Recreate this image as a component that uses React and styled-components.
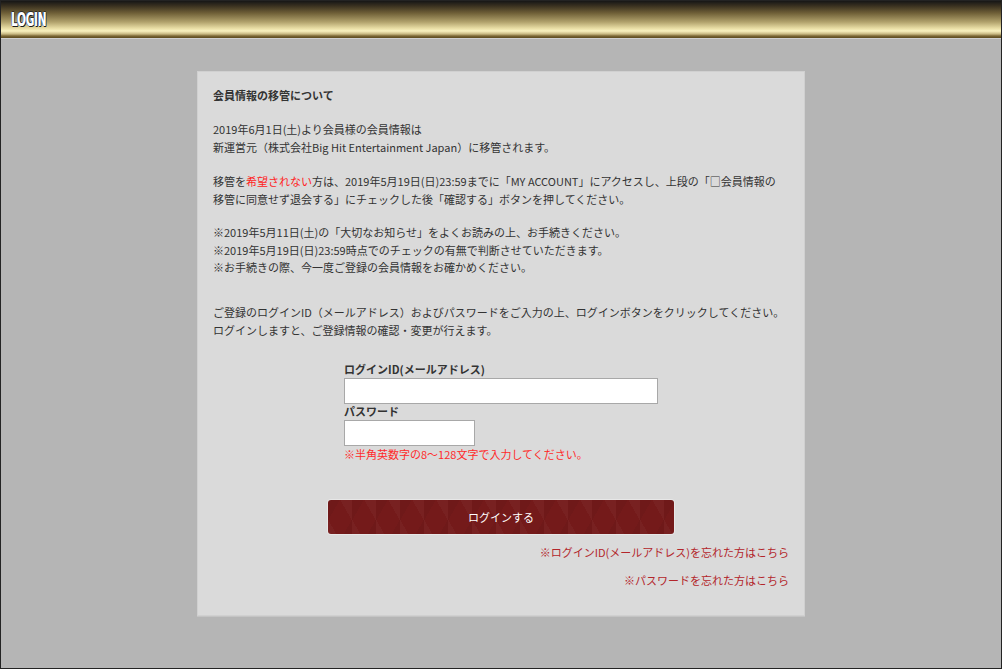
import React from 'react'
import styled, { createGlobalStyle } from 'styled-components'

const GlobalStyle = createGlobalStyle`
  html, body {
    margin: 0;
    padding: 0;
  }
  body {
    font-family: "Noto Sans CJK JP", "Noto Sans", sans-serif;
  }
  * {
    box-sizing: border-box;
  }
`

const Page = styled.div`
  height: 100vh;
  background: #b5b5b5;
  border: 1px solid #232323;
  display: flex;
  flex-direction: column;
  overflow: hidden;
`

const Header = styled.header`
  height: 38px;
  flex-shrink: 0;
  padding-left: 10px;
  display: flex;
  align-items: center;
  background: linear-gradient(
    to bottom,
    #161616 0px,
    #3a3120 5px,
    #6e5f37 12px,
    #b1a26c 21px,
    #e6dba2 27px,
    #faf2bf 30px,
    #c9b982 33px,
    #7c6835 35px,
    #5c4a1e 37px,
    #8c8c8c 38px
  );
  border-bottom: 1px solid #cfcfcf;
`

const HeaderTitle = styled.h1`
  margin: 0;
  font-family: "DejaVu Sans Condensed", "DejaVu Sans", sans-serif;
  font-weight: bold;
  font-size: 19px;
  line-height: 19px;
  letter-spacing: -0.5px;
  transform: scaleX(0.62);
  transform-origin: left center;
  color: #ffffff;
  text-shadow: -1px 0 0 #3d6fb0, 1px 1px 0 #1a1a1a, 0 -1px 0 #2a2a2a, 1px 0 0 #111;
`

const Main = styled.main`
  flex: 1;
  display: flex;
  justify-content: center;
  align-items: flex-start;
  padding-top: 32px;
`

const Card = styled.section`
  width: 608px;
  background: #dadada;
  border: 1px solid #d0d0d0;
  box-shadow: 0 1px 0 #c4c4c4;
  padding: 14px 15px 26px 15px;
  color: #333333;
  font-size: 11px;
  line-height: 18px;
`

const Title = styled.h2`
  margin: 0 0 16px;
  font-size: 11px;
  font-weight: bold;
  line-height: 18px;
`

const Paragraph = styled.p`
  margin: 0;
  margin-bottom: ${p => (p.$gap === undefined ? 16 : p.$gap)}px;
  line-height: ${p => p.$lh || 18}px;
`

const Red = styled.span`
  color: #ff2222;
`

const Form = styled.form`
  margin: 23px auto 0;
  width: 314px;
  display: flex;
  flex-direction: column;
`

const Label = styled.label`
  font-weight: bold;
  line-height: 14px;
  margin-bottom: 2px;
`

const Input = styled.input`
  display: block;
  height: 26px;
  width: ${p => p.$width}px;
  border: 1px solid #a8a8a8;
  background: #ffffff;
  margin: 0;
  padding: 2px 4px;
  font: inherit;
  outline: none;
`

const Note = styled.div`
  color: #ff2a2a;
  line-height: 14px;
  margin-top: 1px;
`

const Button = styled.button`
  display: block;
  margin: 39px auto 0;
  width: 346px;
  height: 34px;
  border: none;
  border-radius: 3px;
  color: #ffffff;
  font-family: inherit;
  font-size: 11px;
  cursor: pointer;
  background-color: #741a1a;
  background-image:
    linear-gradient(60deg, rgba(255, 255, 255, 0.03) 25%, transparent 25%, transparent 75%, rgba(255, 255, 255, 0.03) 75%),
    linear-gradient(-60deg, rgba(0, 0, 0, 0.04) 25%, transparent 25%, transparent 75%, rgba(0, 0, 0, 0.04) 75%);
  background-size: 24px 40px;
  box-shadow: 0 0 0 1px rgba(255, 255, 255, 0.35);
`

const Links = styled.div`
  margin-top: 9px;
  display: flex;
  flex-direction: column;
  align-items: flex-end;
  gap: 10px;
`

const TextLink = styled.a`
  color: #b3262b;
  text-decoration: none;
  line-height: 18px;
`

export default function App() {
  return (
    <Page>
      <GlobalStyle />
      <Header>
        <HeaderTitle>LOGIN</HeaderTitle>
      </Header>
      <Main>
        <Card>
          <Title>会員情報の移管について</Title>
          <Paragraph>
            2019年6月1日(土)より会員様の会員情報は
            <br />
            新運営元（株式会社Big Hit Entertainment Japan）に移管されます。
          </Paragraph>
          <Paragraph>
            移管を<Red>希望されない</Red>方は、2019年5月19日(日)23:59までに「MY ACCOUNT」にアクセスし、上段の「□会員情報の
            <br />
            移管に同意せず退会する」にチェックした後「確認する」ボタンを押してください。
          </Paragraph>
          <Paragraph $gap={26} $lh={17.5}>
            ※2019年5月11日(土)の「大切なお知らせ」をよくお読みの上、お手続きください。
            <br />
            ※2019年5月19日(日)23:59時点でのチェックの有無で判断させていただきます。
            <br />
            ※お手続きの際、今一度ご登録の会員情報をお確かめください。
          </Paragraph>
          <Paragraph $gap={0}>
            ご登録のログインID（メールアドレス）およびパスワードをご入力の上、ログインボタンをクリックしてください。
            <br />
            ログインしますと、ご登録情報の確認・変更が行えます。
          </Paragraph>

          <Form onSubmit={e => e.preventDefault()}>
            <Label htmlFor="login-id">ログインID(メールアドレス)</Label>
            <Input id="login-id" type="text" $width={314} />
            <Label htmlFor="login-pw">パスワード</Label>
            <Input id="login-pw" type="password" $width={131} />
            <Note>※半角英数字の8～128文字で入力してください。</Note>
          </Form>

          <Button type="button">ログインする</Button>

          <Links>
            <TextLink href="#">※ログインID(メールアドレス)を忘れた方はこちら</TextLink>
            <TextLink href="#">※パスワードを忘れた方はこちら</TextLink>
          </Links>
        </Card>
      </Main>
    </Page>
  )
}
